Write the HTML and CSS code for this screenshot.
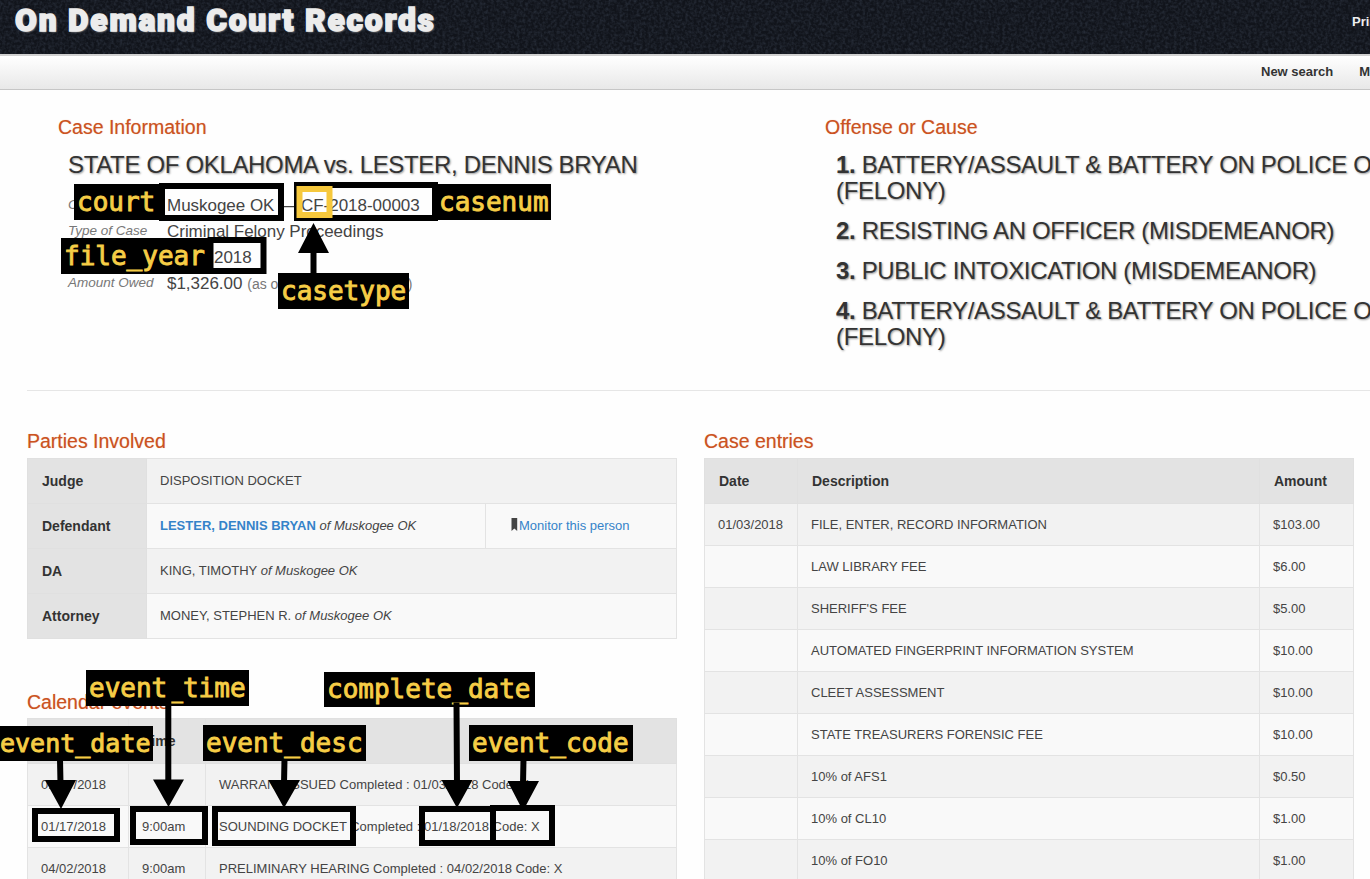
FILE: index.html
```html
<!DOCTYPE html>
<html lang="en">
<head>
<meta charset="utf-8">
<title>On Demand Court Records</title>
<link rel="stylesheet" href="styles.css">
</head>
<body>
<div class="page">
  <header class="masthead">
    <svg class="grain" width="1400" height="54" aria-hidden="true"><filter id="n"><feTurbulence type="fractalNoise" baseFrequency="0.35" numOctaves="2" seed="3"/><feColorMatrix values="0 0 0 0 .12  0 0 0 0 .16  0 0 0 0 .24  .5 0 0 0 -.18"/></filter><rect width="1400" height="54" filter="url(#n)"/></svg>
    <h1 class="brand">On Demand Court Records</h1>
    <a class="print">Print</a>
  </header>
  <nav class="nav"><a>New search</a><a>My</a></nav>

  <section class="summary">
    <div class="case">
      <h3 class="heading">Case Information</h3>
      <h2 class="title">STATE OF OKLAHOMA vs. LESTER, DENNIS BRYAN</h2>
      <dl class="facts">
        <dt>Court</dt><dd><span class="cty">Muskogee OK</span><span class="dash">—</span><span class="num">CF-2018-00003</span></dd>
        <dt>Type of Case</dt><dd>Criminal Felony Proceedings</dd>
        <dt>Filed</dt><dd class="filed">2018</dd>
        <dt>Amount Owed</dt><dd class="owed"><span>$1,326.00</span><small><span>(as of</span><span>)</span></small></dd>
      </dl>
    </div>
    <div class="offense">
      <h3 class="heading">Offense or Cause</h3>
      <div class="counts">
        <p><b>1.</b> BATTERY/ASSAULT &amp; BATTERY ON POLICE OFFICER<br>(FELONY)</p>
        <p><b>2.</b> RESISTING AN OFFICER (MISDEMEANOR)</p>
        <p><b>3.</b> PUBLIC INTOXICATION (MISDEMEANOR)</p>
        <p><b>4.</b> BATTERY/ASSAULT &amp; BATTERY ON POLICE OFFICER<br>(FELONY)</p>
      </div>
    </div>
  </section>

  <main class="columns">
    <div class="left">
      <h3 class="heading">Parties Involved</h3>
      <table class="grid parties">
        <colgroup><col class="p1"><col class="p2"><col></colgroup>
        <tr><th>Judge</th><td colspan="2">DISPOSITION DOCKET</td></tr>
        <tr><th>Defendant</th><td><a class="link"><b>LESTER, DENNIS BRYAN</b></a> <i>of Muskogee OK</i></td><td class="monitor"><svg width="7" height="13" viewBox="0 0 7 13"><path d="M.5 0h5.700v13L3.350 10.500.5 13z" fill="#444"/></svg><a class="link">Monitor this person</a></td></tr>
        <tr><th>DA</th><td colspan="2">KING, TIMOTHY <i>of Muskogee OK</i></td></tr>
        <tr><th>Attorney</th><td colspan="2">MONEY, STEPHEN R. <i>of Muskogee OK</i></td></tr>
      </table>
      <h3 class="heading events-heading">Calendar events</h3>
      <table class="grid events">
        <colgroup><col class="e1"><col class="e2"><col></colgroup>
        <tr><th>Date</th><th>Time</th><th></th></tr>
        <tr><td>01/17/2018</td><td></td><td>WARRANT ISSUED Completed : 01/03/2018 Code: X</td></tr>
        <tr><td>01/17/2018</td><td>9:00am</td><td>SOUNDING DOCKET Completed : 01/18/2018 Code: X</td></tr>
        <tr><td>04/02/2018</td><td>9:00am</td><td>PRELIMINARY HEARING Completed : 04/02/2018 Code: X</td></tr>
      </table>
    </div>
    <div class="right">
      <h3 class="heading">Case entries</h3>
      <table class="grid entries">
        <colgroup><col class="c1"><col class="c2"><col></colgroup>
        <tr><th>Date</th><th>Description</th><th>Amount</th></tr>
        <tr><td>01/03/2018</td><td>FILE, ENTER, RECORD INFORMATION</td><td>$103.00</td></tr>
        <tr><td></td><td>LAW LIBRARY FEE</td><td>$6.00</td></tr>
        <tr><td></td><td>SHERIFF'S FEE</td><td>$5.00</td></tr>
        <tr><td></td><td>AUTOMATED FINGERPRINT INFORMATION SYSTEM</td><td>$10.00</td></tr>
        <tr><td></td><td>CLEET ASSESSMENT</td><td>$10.00</td></tr>
        <tr><td></td><td>STATE TREASURERS FORENSIC FEE</td><td>$10.00</td></tr>
        <tr><td></td><td>10% of AFS1</td><td>$0.50</td></tr>
        <tr><td></td><td>10% of CL10</td><td>$1.00</td></tr>
        <tr><td></td><td>10% of FO10</td><td>$1.00</td></tr>
      </table>
    </div>
  </main>

  <div class="notes">
    <span class="tag t-court">court</span>
    <span class="tag t-casenum">casenum</span>
    <span class="tag t-year">file_year</span>
    <span class="tag t-type">casetype</span>
    <span class="tag t-time">event_time</span>
    <span class="tag t-complete">complete_date</span>
    <span class="tag t-date">event_date</span>
    <span class="tag t-desc">event_desc</span>
    <span class="tag t-code">event_code</span>
    <svg class="marks" width="1370" height="879" aria-hidden="true">
      <g fill="none" stroke="#000" stroke-width="6">
        <rect x="162" y="186" width="119" height="32"/>
        <rect x="297" y="185" width="138" height="33"/>
        <rect x="210.5" y="240" width="53" height="31"/>
        <rect x="35" y="811" width="82" height="28"/>
        <rect x="133" y="809" width="72" height="33"/>
        <rect x="215" y="809" width="138" height="34"/>
        <rect x="422" y="809" width="71" height="34"/>
        <rect x="493" y="808" width="59" height="35"/>
        <rect x="299.5" y="189" width="30" height="26" stroke="#f6c83c"/>
        <path d="M313.500 275V250M60 759L60.500 784M168.300 701V784M284.500 759L284 784M456.500 702.500L457 784M523.500 759L523 784"/>
      </g>
      <path d="M313.500 223L329 253H298zM45 780H76L61 809zM153 779.500H184L168.500 807zM268.500 780H300L284 808zM441.500 780H472.500L457 808zM507.500 781H539L523 811z"/>
    </svg>
  </div>
</div>
</body>
</html>
```
FILE: styles.css
```css
* { box-sizing: border-box; }
html, body { margin: 0; height: 100%; overflow: hidden; }
body { background: #fefefe; color: #444; font-family: "Liberation Sans", Arial, sans-serif; font-size: 13px; }
h1, h2, h3, p, dl, dd { margin: 0; font-weight: normal; }
.page { position: relative; width: 1400px; height: 879px; overflow: hidden; }

.masthead { position: relative; display: flex; justify-content: space-between; height: 54px; padding: 0 0 0 15px; background: #11141b; }
.grain { position: absolute; top: 0; left: 0; }
.brand { position: relative; font: 900 31.5px/42px Roboto, sans-serif; color: #ececec; letter-spacing: 1.9px; -webkit-text-stroke: 1.6px #ececec; text-shadow: 1px 1px 2px #aaa; white-space: nowrap; }
.print { position: relative; width: 48px; font-weight: bold; line-height: 44px; color: #eee; }
.nav { display: flex; height: 36px; border-top: 2px solid #d0d0d0; border-bottom: 1px solid #c6c6c6; background: linear-gradient(#fff, #e8e8e8); padding-left: 1261px; gap: 26px; font-weight: bold; line-height: 32px; color: #333; white-space: nowrap; }

.heading { font-size: 19.5px; line-height: 26px; color: #cb5221; text-shadow: 0 0 1px #e9b59c; }
.summary { display: flex; height: 301px; margin-left: 27px; padding: 24px 0 0 31px; border-bottom: 1px solid #e6e6e6; }
.case { flex: none; width: 767px; }
.offense { flex: none; }
.title, .counts { font-size: 24px; line-height: 26px; color: #333; text-shadow: 1px 1px 2px #999; white-space: nowrap; letter-spacing: -.34px; }
.title { margin: 12px 0 14px 10px; }
.counts { margin: 12px 0 0 11px; display: flex; flex-direction: column; gap: 14px; }
.facts { display: grid; grid-template-columns: 99px 1fr; grid-auto-rows: 26px; line-height: 28px; padding-left: 10px; }
.facts dt { font-style: italic; color: #777; font-size: 13.5px; line-height: 25px; }
.facts dd { font-size: 17px; display: flex; white-space: nowrap; letter-spacing: -.03px; }
.cty { width: 115px; }
.dash { width: 19px; }
.facts .filed { padding-left: 47px; }
.owed { gap: 5px; }
.owed small { display: flex; justify-content: space-between; width: 165px; font-size: 14px; line-height: 29px; color: #777; }

.columns { display: flex; gap: 27px; padding: 37px 0 0 27px; }
.left, .right { width: 650px; }
.grid { width: 650px; margin-top: 4px; table-layout: fixed; border-collapse: collapse; white-space: nowrap; }
.grid tr { height: 42px; background: #f9f9f9; }
.grid th, .grid td { padding: 0 0 0 13px; text-align: left; border: 1px solid #e3e3e3; }
.grid th { padding-left: 14px; background: #e3e3e3; color: #333; font-size: 14px; border-color: #e0e0e0; }
.events tr:first-child, .entries tr:first-child { height: 45px; }
.parties tr { height: 45px; }
.grid.parties td { padding: 0 0 2px 13px; }
.events tr:nth-child(even), .entries tr:nth-child(even), .parties tr:nth-child(odd) { background: #f2f2f2; }
.p1 { width: 119px; }
.p2 { width: 339px; }
.e1 { width: 101px; }
.e2 { width: 77px; }
.c1 { width: 93px; }
.c2 { width: 462px; }
.link { color: #3583c9; }
.grid.parties .monitor { padding-left: 25px; }
.monitor svg { margin-right: 1px; vertical-align: -1px; }
.events-heading { margin-top: 50px; }
.events { margin-top: 3px; }

.notes { position: absolute; inset: 0; }
.marks { position: absolute; inset: 0; }
.tag { position: absolute; height: 36px; padding-left: 3px; background: #000; color: #f6cd46; font: 26px/36px "DejaVu Sans Mono", monospace; -webkit-text-stroke: .9px #f6cd46; white-space: nowrap; }
.t-court { left: 74px; top: 184px; width: 86px; }
.t-casenum { left: 436px; top: 184px; width: 115px; }
.t-year { left: 61px; top: 238px; width: 148px; }
.t-type { left: 278px; top: 273px; width: 131px; line-height: 37px; }
.t-time { left: 86px; top: 670px; width: 163px; }
.t-complete { left: 324px; top: 672px; width: 211px; height: 35px; line-height: 35px; }
.t-date { left: -2px; top: 726px; width: 155px; height: 35px; padding-left: 2px; font-size: 25px; line-height: 35px; }
.t-desc { left: 203px; top: 725px; width: 163px; line-height: 37px; }
.t-code { left: 469px; top: 725px; width: 164px; }
```
